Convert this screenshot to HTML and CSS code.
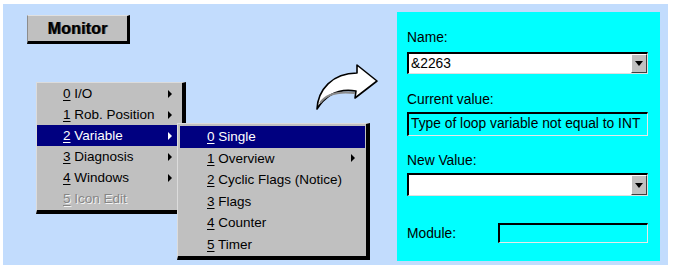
FILE: index.html
```html
<!DOCTYPE html>
<html>
<head>
<meta charset="utf-8">
<link rel="stylesheet" href="styles.css">
</head>
<body>
<div class="frame">
  <div class="stage">
    <div class="btn"><span>Monitor</span></div>

    <div class="menu main">
      <div class="item"><span class="lbl"><u>0</u> I/O</span><span class="arr"></span></div>
      <div class="item"><span class="lbl"><u>1</u> Rob. Position</span><span class="arr"></span></div>
      <div class="item sel"><span class="lbl"><u>2</u> Variable</span><span class="arr"></span></div>
      <div class="item"><span class="lbl"><u>3</u> Diagnosis</span><span class="arr"></span></div>
      <div class="item"><span class="lbl"><u>4</u> Windows</span><span class="arr"></span></div>
      <div class="item dis"><span class="lbl"><u>5</u> Icon Edit</span></div>
    </div>

    <div class="menu sub">
      <div class="item sel"><span class="lbl"><u>0</u> Single</span></div>
      <div class="item"><span class="lbl"><u>1</u> Overview</span><span class="arr"></span></div>
      <div class="item"><span class="lbl"><u>2</u> Cyclic Flags (Notice)</span></div>
      <div class="item"><span class="lbl"><u>3</u> Flags</span></div>
      <div class="item"><span class="lbl"><u>4</u> Counter</span></div>
      <div class="item"><span class="lbl"><u>5</u> Timer</span></div>
    </div>

    <svg class="arrow" width="72" height="56" viewBox="0 0 72 56">
      <path d="M7 49 C8 30 22 13 47 13 L47 5 L67 21 L45 38 L46 31 C28 28 15 36 7 49 Z" fill="#fff" stroke="#000" stroke-width="1.6" stroke-linejoin="round"/>
      <path d="M10 43 C16 34 28 31 45 33" fill="none" stroke="#8a8a8a" stroke-width="2"/>
    </svg>
  </div>

  <div class="panel">
    <div class="label first">Name:</div>
    <div class="combo"><span class="val">&amp;2263</span><span class="drop"><span class="tri"></span></span></div>
    <div class="label">Current value:</div>
    <div class="field">Type of loop variable not equal to INT</div>
    <div class="label nv">New Value:</div>
    <div class="combo tall"><span class="val"></span><span class="drop"><span class="tri"></span></span></div>
    <div class="modrow">
      <span class="modlbl">Module:</span>
      <span class="modbox"></span>
    </div>
  </div>
</div>
</body>
</html>
```

FILE: styles.css
```css
html, body {
  margin: 0;
  padding: 0;
  background: #ffffff;
}

body {
  font-family: "Liberation Sans", Arial, sans-serif;
  width: 676px;
  height: 271px;
  overflow: hidden;
}

.frame {
  margin: 4px 0 0 3px;
  width: 665px;
  height: 261px;
  background: #c2dcfd;
  display: flex;
}

.stage {
  position: relative;
  width: 394px;
  padding: 11px 0 0 24px;
  box-sizing: border-box;
}

/* Monitor button */
.btn {
  width: 99px;
  height: 25px;
  background: #c0c0c0;
  border-left: 1px solid #8c8c8c;
  border-top: 1px solid #e0e0e0;
  border-right: 3px solid #000;
  border-bottom: 3px solid #000;
  display: flex;
  align-items: center;
  justify-content: center;
  font-weight: bold;
  font-size: 16px;
  color: #000;
  text-shadow: 1px 0 0 #505050;
  letter-spacing: 0.2px;
}

/* popup menus */
.menu {
  position: absolute;
  background: #c0c0c0;
  border-left: 1px solid #dcdcdc;
  border-top: 1px solid #dcdcdc;
  border-right: 4px solid #000;
  border-bottom: 4px solid #000;
  font-size: 13.5px;
  color: #000;
}

.menu.main {
  left: 33px;
  top: 78px;
  width: 145px;
  padding: 0 0 1px 0;
}

.menu.sub {
  left: 174px;
  top: 119px;
  width: 185px;
  padding: 2px 1px 1px 2px;
}

.item {
  display: flex;
  align-items: center;
  justify-content: space-between;
  height: 21px;
  padding: 0 10px 0 26px;
}

.sub .item {
  height: 21.5px;
  padding: 0 10px 0 27px;
}

.item u {
  text-decoration: underline;
  text-underline-offset: 2px;
}

.item.sel {
  background: #000080;
  color: #fff;
}

.item.dis {
  color: #868686;
  text-shadow: 1px 1px 0 #f4f4f4;
}

.arr {
  width: 0;
  height: 0;
  border-top: 4px solid transparent;
  border-bottom: 4px solid transparent;
  border-left: 4px solid #000;
}

.item.sel .arr {
  border-left-color: #fff;
}

.arrow {
  position: absolute;
  left: 307px;
  top: 56px;
}

/* right panel */
.panel {
  width: 263px;
  margin: 8px 8px 4px 0;
  background: #00ffff;
  box-sizing: border-box;
  padding: 18px 12px 0 10px;
  font-size: 13.8px;
  color: #000;
}

.label {
  height: 16px;
  line-height: 16px;
  margin: 18px 0 4px 0;
}

.label.first {
  margin: 0 0 6px 0;
}

.label.nv {
  margin-top: 17px;
}

.combo {
  height: 22px;
  box-sizing: border-box;
  background: #fff;
  border-top: 2px solid #000;
  border-left: 2px solid #000;
  border-right: 1px solid #e0e0e0;
  border-bottom: 1px solid #e0e0e0;
  display: flex;
  align-items: center;
  justify-content: space-between;
}

.combo.tall {
  height: 23px;
}

.val {
  padding-left: 2px;
}

.drop {
  width: 16px;
  height: 100%;
  box-sizing: border-box;
  background: #c0c0c0;
  border-top: 1px solid #fff;
  border-left: 1px solid #fff;
  border-right: 1px solid #404040;
  border-bottom: 1px solid #404040;
  display: flex;
  align-items: center;
  justify-content: center;
}

.tri {
  width: 0;
  height: 0;
  border-left: 4px solid transparent;
  border-right: 4px solid transparent;
  border-top: 5px solid #000;
}

.field {
  height: 24px;
  box-sizing: border-box;
  border-top: 2px solid #000;
  border-left: 2px solid #000;
  border-right: 1px solid #e8e8e8;
  border-bottom: 1px solid #e8e8e8;
  padding-left: 2px;
  line-height: 20px;
  white-space: nowrap;
}

.modrow {
  display: flex;
  align-items: center;
  margin-top: 27px;
}

.modlbl {
  width: 91px;
}

.modbox {
  width: 150px;
  height: 20px;
  box-sizing: border-box;
  border-top: 2px solid #000;
  border-left: 2px solid #000;
  border-right: 1px solid #e8e8e8;
  border-bottom: 1px solid #e8e8e8;
}
```
